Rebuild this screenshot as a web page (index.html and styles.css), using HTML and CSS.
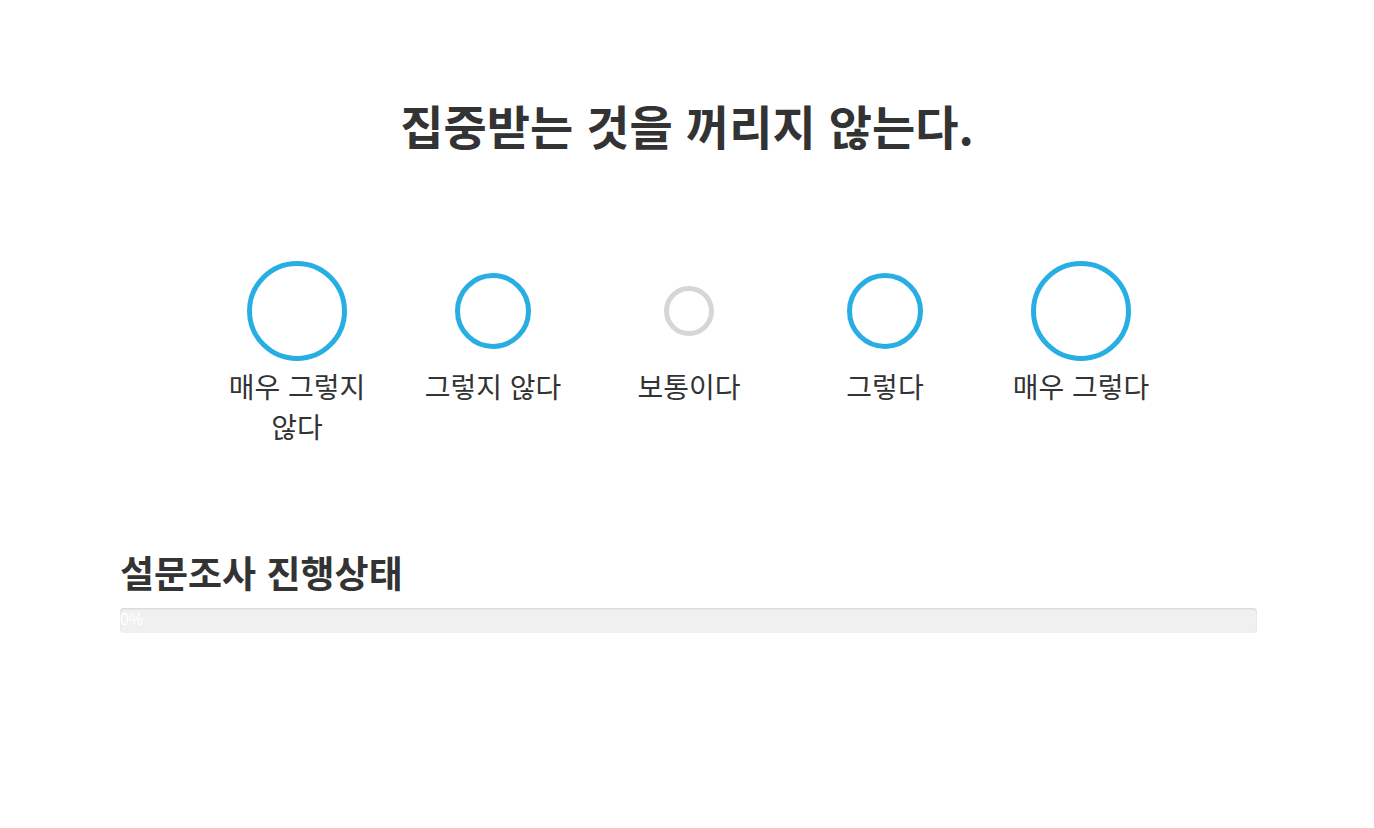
FILE: index.html
```html
<!DOCTYPE html>
<html lang="ko">
<head>
<meta charset="utf-8">
<link rel="stylesheet" href="styles.css">
</head>
<body>
<div class="container">
  <h1 class="question">집중받는 것을 꺼리지 않는다.</h1>
  <div class="scale">
    <div class="option">
      <div class="ring-box"><span class="ring ring-lg"></span></div>
      <div class="label">매우 그렇지 않다</div>
    </div>
    <div class="option">
      <div class="ring-box"><span class="ring ring-md"></span></div>
      <div class="label">그렇지 않다</div>
    </div>
    <div class="option">
      <div class="ring-box"><span class="ring ring-sm"></span></div>
      <div class="label">보통이다</div>
    </div>
    <div class="option">
      <div class="ring-box"><span class="ring ring-md"></span></div>
      <div class="label">그렇다</div>
    </div>
    <div class="option">
      <div class="ring-box"><span class="ring ring-lg"></span></div>
      <div class="label">매우 그렇다</div>
    </div>
  </div>
  <h2 class="progress-title">설문조사 진행상태</h2>
  <div class="progress"><div class="progress-bar">0%</div></div>
</div>
</body>
</html>
```
FILE: styles.css
```css
* { box-sizing: border-box; }
html, body { margin: 0; padding: 0; background: #fff; }
body {
  font-family: "Noto Sans CJK KR", "Noto Sans", sans-serif;
  color: #333;
}
.container {
  width: 1170px;
  margin: 0 auto;
  padding: 0 15px;
}
.question {
  margin: 0;
  padding-top: 93px;
  font-size: 47px;
  line-height: 64px;
  font-weight: 700;
  text-align: center;
  color: #333;
}
.scale {
  display: flex;
  justify-content: center;
  margin-top: 103px;
  padding-left: 4px;
}
.option {
  width: 196px;
  padding: 0 15px;
  display: flex;
  flex-direction: column;
  align-items: center;
}
.ring-box {
  height: 102px;
  display: flex;
  align-items: center;
  justify-content: center;
}
.ring {
  display: block;
  border-radius: 50%;
  border: 5px solid #29aee3;
}
.ring-lg { width: 100px; height: 100px; }
.ring-md { width: 76px; height: 76px; }
.ring-sm { width: 50px; height: 50px; border-color: #d6d6d6; }
.label {
  margin-top: 4px;
  font-size: 28px;
  line-height: 40px;
  text-align: center;
  word-break: keep-all;
  color: #333;
}
.progress-title {
  margin: 102px 0 0;
  font-size: 37px;
  line-height: 48px;
  font-weight: 700;
  padding-left: 3px;
}
.progress {
  margin: 12px 0 0 3px;
  height: 25px;
  background: #f0f0f0;
  border-radius: 4px;
  box-shadow: inset 0 1px 2px rgba(0,0,0,0.12);
  overflow: hidden;
}
.progress-bar {
  width: 0;
  height: 100%;
  font-size: 16px;
  line-height: 24px;
  color: #fff;
  white-space: nowrap;
  font-family: "Liberation Sans", Arial, sans-serif;
}
```
